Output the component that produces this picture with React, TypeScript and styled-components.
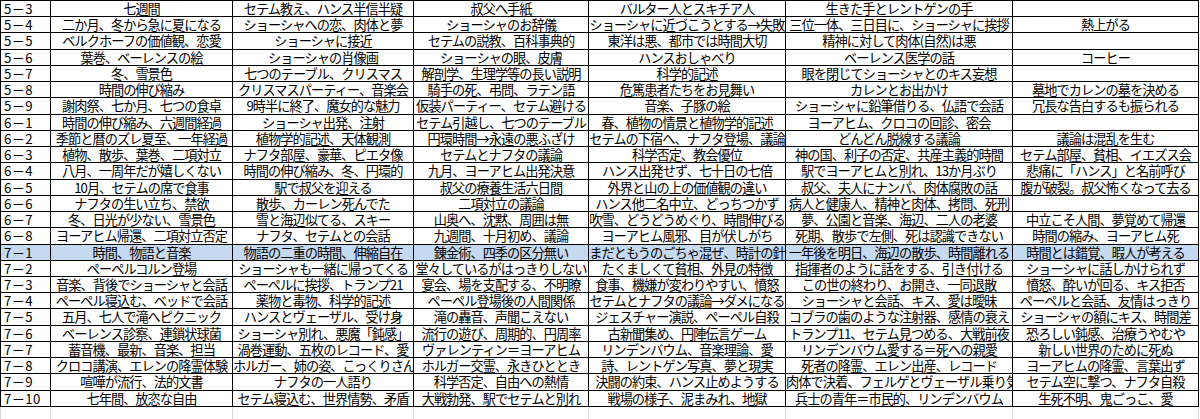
import React from "react";
import styled, { createGlobalStyle } from "styled-components";

const GlobalStyle = createGlobalStyle`
  html, body {
    margin: 0;
    padding: 0;
    background: #fff;
  }
  body {
    font-family: "Noto Sans CJK JP", "Noto Sans", sans-serif;
    color: #000;
  }
`;

// column widths between the 1px rules
const COLS = "49px 181px 180px 174px 196px 226px 185px";

const Sheet = styled.div`
  display: flex;
  flex-direction: column;
  width: 1200px;
`;

const Table = styled.div`
  display: grid;
  grid-template-columns: ${COLS};
  grid-auto-rows: 15.24px;
  gap: 1px;
  padding: 1px;
  background: #000;
  width: max-content;
`;

const Row = styled.div`
  display: contents;
`;

const Cell = styled.div<{ $label?: boolean; $hl?: boolean }>`
  background: ${(p) => (p.$hl ? "#c5d9f1" : "#fff")};
  font-size: 13.2px;
  line-height: 15.24px;
  white-space: nowrap;
  overflow-x: clip;
  overflow-y: visible;
  text-align: ${(p) => (p.$label ? "left" : "center")};
  padding: ${(p) => (p.$label ? "0 0 0 3px" : "0")};
  letter-spacing: ${(p) => (p.$label ? "0.4px" : "-0.95px")};
`;

const Filler = styled.div`
  display: grid;
  grid-template-columns: ${COLS};
  height: 12px;
  gap: 1px;
  padding: 0 1px;
  background: #d9d9d9;
  width: max-content;
`;

const Blank = styled.div`
  background: #fff;
`;

type Line = { label: string; cells: string[]; hl?: boolean };

const rows: Line[] = [
  { label: "5－3", cells: ["七週間", "セテム教え、ハンス半信半疑", "叔父へ手紙", "バルター人とスキチア人", "生きた手とレントゲンの手", ""] },
  { label: "5－4", cells: ["二か月、冬から急に夏になる", "ショーシャへの恋、肉体と夢", "ショーシャのお辞儀", "ショーシャに近づこうとする→失敗", "三位一体、三日目に、ショーシャに挨拶", "熱上がる"] },
  { label: "5－5", cells: ["ベルクホーフの価値観、恋愛", "ショーシャに接近", "セテムの説教、百科事典的", "東洋は悪、都市では時間大切", "精神に対して肉体(自然)は悪", ""] },
  { label: "5－6", cells: ["葉巻、ベーレンスの絵", "ショーシャの肖像画", "ショーシャの眼、皮膚", "ハンスおしゃべり", "ベーレンス医学の話", "コーヒー"] },
  { label: "5－7", cells: ["冬、雪景色", "七つのテーブル、クリスマス", "解剖学、生理学等の長い説明", "科学的記述", "眼を閉じてショーシャとのキス妄想", ""] },
  { label: "5－8", cells: ["時間の伸び縮み", "クリスマスパーティー、音楽会", "騎手の死、弔問、ラテン語", "危篤患者たちをお見舞い", "カレンとお出かけ", "墓地でカレンの墓を決める"] },
  { label: "5－9", cells: ["謝肉祭、七か月、七つの食卓", "9時半に終了、魔女的な魅力", "仮装パーティー、セテム避ける", "音楽、子豚の絵", "ショーシャに鉛筆借りる、仏語で会話", "冗長な告白するも振られる"] },
  { label: "6－1", cells: ["時間の伸び縮み、六週間経過", "ショーシャ出発、注射", "セテム引越し、七つのテーブル", "春、植物の情景と植物学的記述", "ヨーアヒム、クロコの回診、密会", ""] },
  { label: "6－2", cells: ["季節と暦のズレ夏至、一年経過", "植物学的記述、天体観測", "円環時間→永遠の悪ふざけ", "セテムの下宿へ、ナフタ登場、議論", "どんどん脱線する議論", "議論は混乱を生む"] },
  { label: "6－3", cells: ["植物、散歩、葉巻、二項対立", "ナフタ部屋、豪華、ピエタ像", "セテムとナフタの議論", "科学否定、教会優位", "神の国、利子の否定、共産主義的時間", "セテム部屋、貧相、イエズス会"] },
  { label: "6－4", cells: ["八月、一周年だが嬉しくない", "時間の伸び縮み、冬、円環的", "九月、ヨーアヒム出発決意", "ハンス出発せず、七十日の七倍", "駅でヨーアヒムと別れ、13か月ぶり", "悲痛に「ハンス」と名前呼び"] },
  { label: "6－5", cells: ["10月、セテムの席で食事", "駅で叔父を迎える", "叔父の療養生活六日間", "外界と山の上の価値観の違い", "叔父、夫人にナンパ、肉体腐敗の話", "腹が破裂。叔父怖くなって去る"] },
  { label: "6－6", cells: ["ナフタの生い立ち、禁欲", "散歩、カーレン死んでた", "二項対立の議論", "ハンス他二名中立、どっちつかず", "病人と健康人、精神と肉体、拷問、死刑", ""] },
  { label: "6－7", cells: ["冬、日光が少ない、雪景色", "雪と海辺似てる、スキー", "山奥へ、沈黙、周囲は無", "吹雪、どうどうめぐり、時間伸びる", "夢、公園と音楽、海辺、二人の老婆", "中立こそ人間、夢覚めて帰還"] },
  { label: "6－8", cells: ["ヨーアヒム帰還、二項対立否定", "ナフタ、セテムとの会話", "九週間、十月初め、議論", "ヨーアヒム風邪、目が伏しがち", "死期、散歩で左側、死は認識できない", "時間の縮み、ヨーアヒム死"] },
  { label: "7－1", hl: true, cells: ["時間、物語と音楽", "物語の二重の時間、伸縮自在", "錬金術、四季の区分無い", "まだともうのごちゃ混ぜ、時計の針", "一年後を明日、海辺の散歩、時間離れる", "時間とは錯覚、暇人が考える"] },
  { label: "7－2", cells: ["ペーペルコルン登場", "ショーシャも一緒に帰ってくる", "堂々しているがはっきりしない", "たくましくて貧相、外見の特徴", "指揮者のように話をする、引き付ける", "ショーシャに話しかけられず"] },
  { label: "7－3", cells: ["音楽、背後でショーシャと会話", "ペーペルに挨拶、トランプ21", "宴会、場を支配する、不明瞭", "食事、機嫌が変わりやすい、憤怒", "この世の終わり、お開き、一同退散", "憤怒、酔いが回る、キス拒否"] },
  { label: "7－4", cells: ["ペーペル寝込む、ベッドで会話", "薬物と毒物、科学的記述", "ペーペル登場後の人間関係", "セテムとナフタの議論→ダメになる", "ショーシャと会話、キス、愛は曖昧", "ペーペルと会話、友情はっきり"] },
  { label: "7－5", cells: ["五月、七人で滝へピクニック", "ハンスとヴェーザル、受け身", "滝の轟音、声聞こえない", "ジェスチャー演説、ペーペル自殺", "コブラの歯のような注射器、感情の衰え", "ショーシャの額にキス、時間差"] },
  { label: "7－6", cells: ["ベーレンス診察、連鎖状球菌", "ショーシャ別れ、悪魔「鈍感」", "流行の遊び、周期的、円周率", "古新聞集め、円陣伝言ゲーム", "トランプ11、セテム見つめる、大戦前夜", "恐ろしい鈍感、治療うやむや"] },
  { label: "7－7", cells: ["蓄音機、最新、音楽、担当", "渦巻運動、五枚のレコード、愛", "ヴァレンティン＝ヨーアヒム", "リンデンバウム、音楽理論、愛", "リンデンバウム愛する＝死への親愛", "新しい世界のために死ぬ"] },
  { label: "7－8", cells: ["クロコ講演、エレンの降霊体験", "ホルガー、姉の姿、こっくりさん", "ホルガー交霊、永きひととき", "詩、レントゲン写真、夢と現実", "死者の降霊、エレン出産、レコード", "ヨーアヒムの降霊、言葉出ず"] },
  { label: "7－9", cells: ["喧嘩が流行、法的文書", "ナフタの一人語り", "科学否定、自由への熱情", "決闘の約束、ハンス止めようする", "肉体で決着、フェルゲとヴェーザル乗り気", "セテム空に撃つ、ナフタ自殺"] },
  { label: "7－10", cells: ["七年間、放恣な自由", "セテム寝込む、世界情勢、矛盾", "大戦勃発、駅でセテムと別れ", "戦場の様子、泥まみれ、地獄", "兵士の青年＝市民的、リンデンバウム", "生死不明、鬼ごっこ、愛"] },
];

export default function App() {
  return (
    <>
      <GlobalStyle />
      <Sheet>
        <Table>
          {rows.map((r) => (
            <Row key={r.label}>
              <Cell $label $hl={r.hl}>{r.label}</Cell>
              {r.cells.map((c, i) => (
                <Cell key={i} $hl={r.hl}>{c}</Cell>
              ))}
            </Row>
          ))}
        </Table>
        <Filler>
          {Array.from({ length: 7 }, (_, i) => (
            <Blank key={i} />
          ))}
        </Filler>
      </Sheet>
    </>
  );
}
